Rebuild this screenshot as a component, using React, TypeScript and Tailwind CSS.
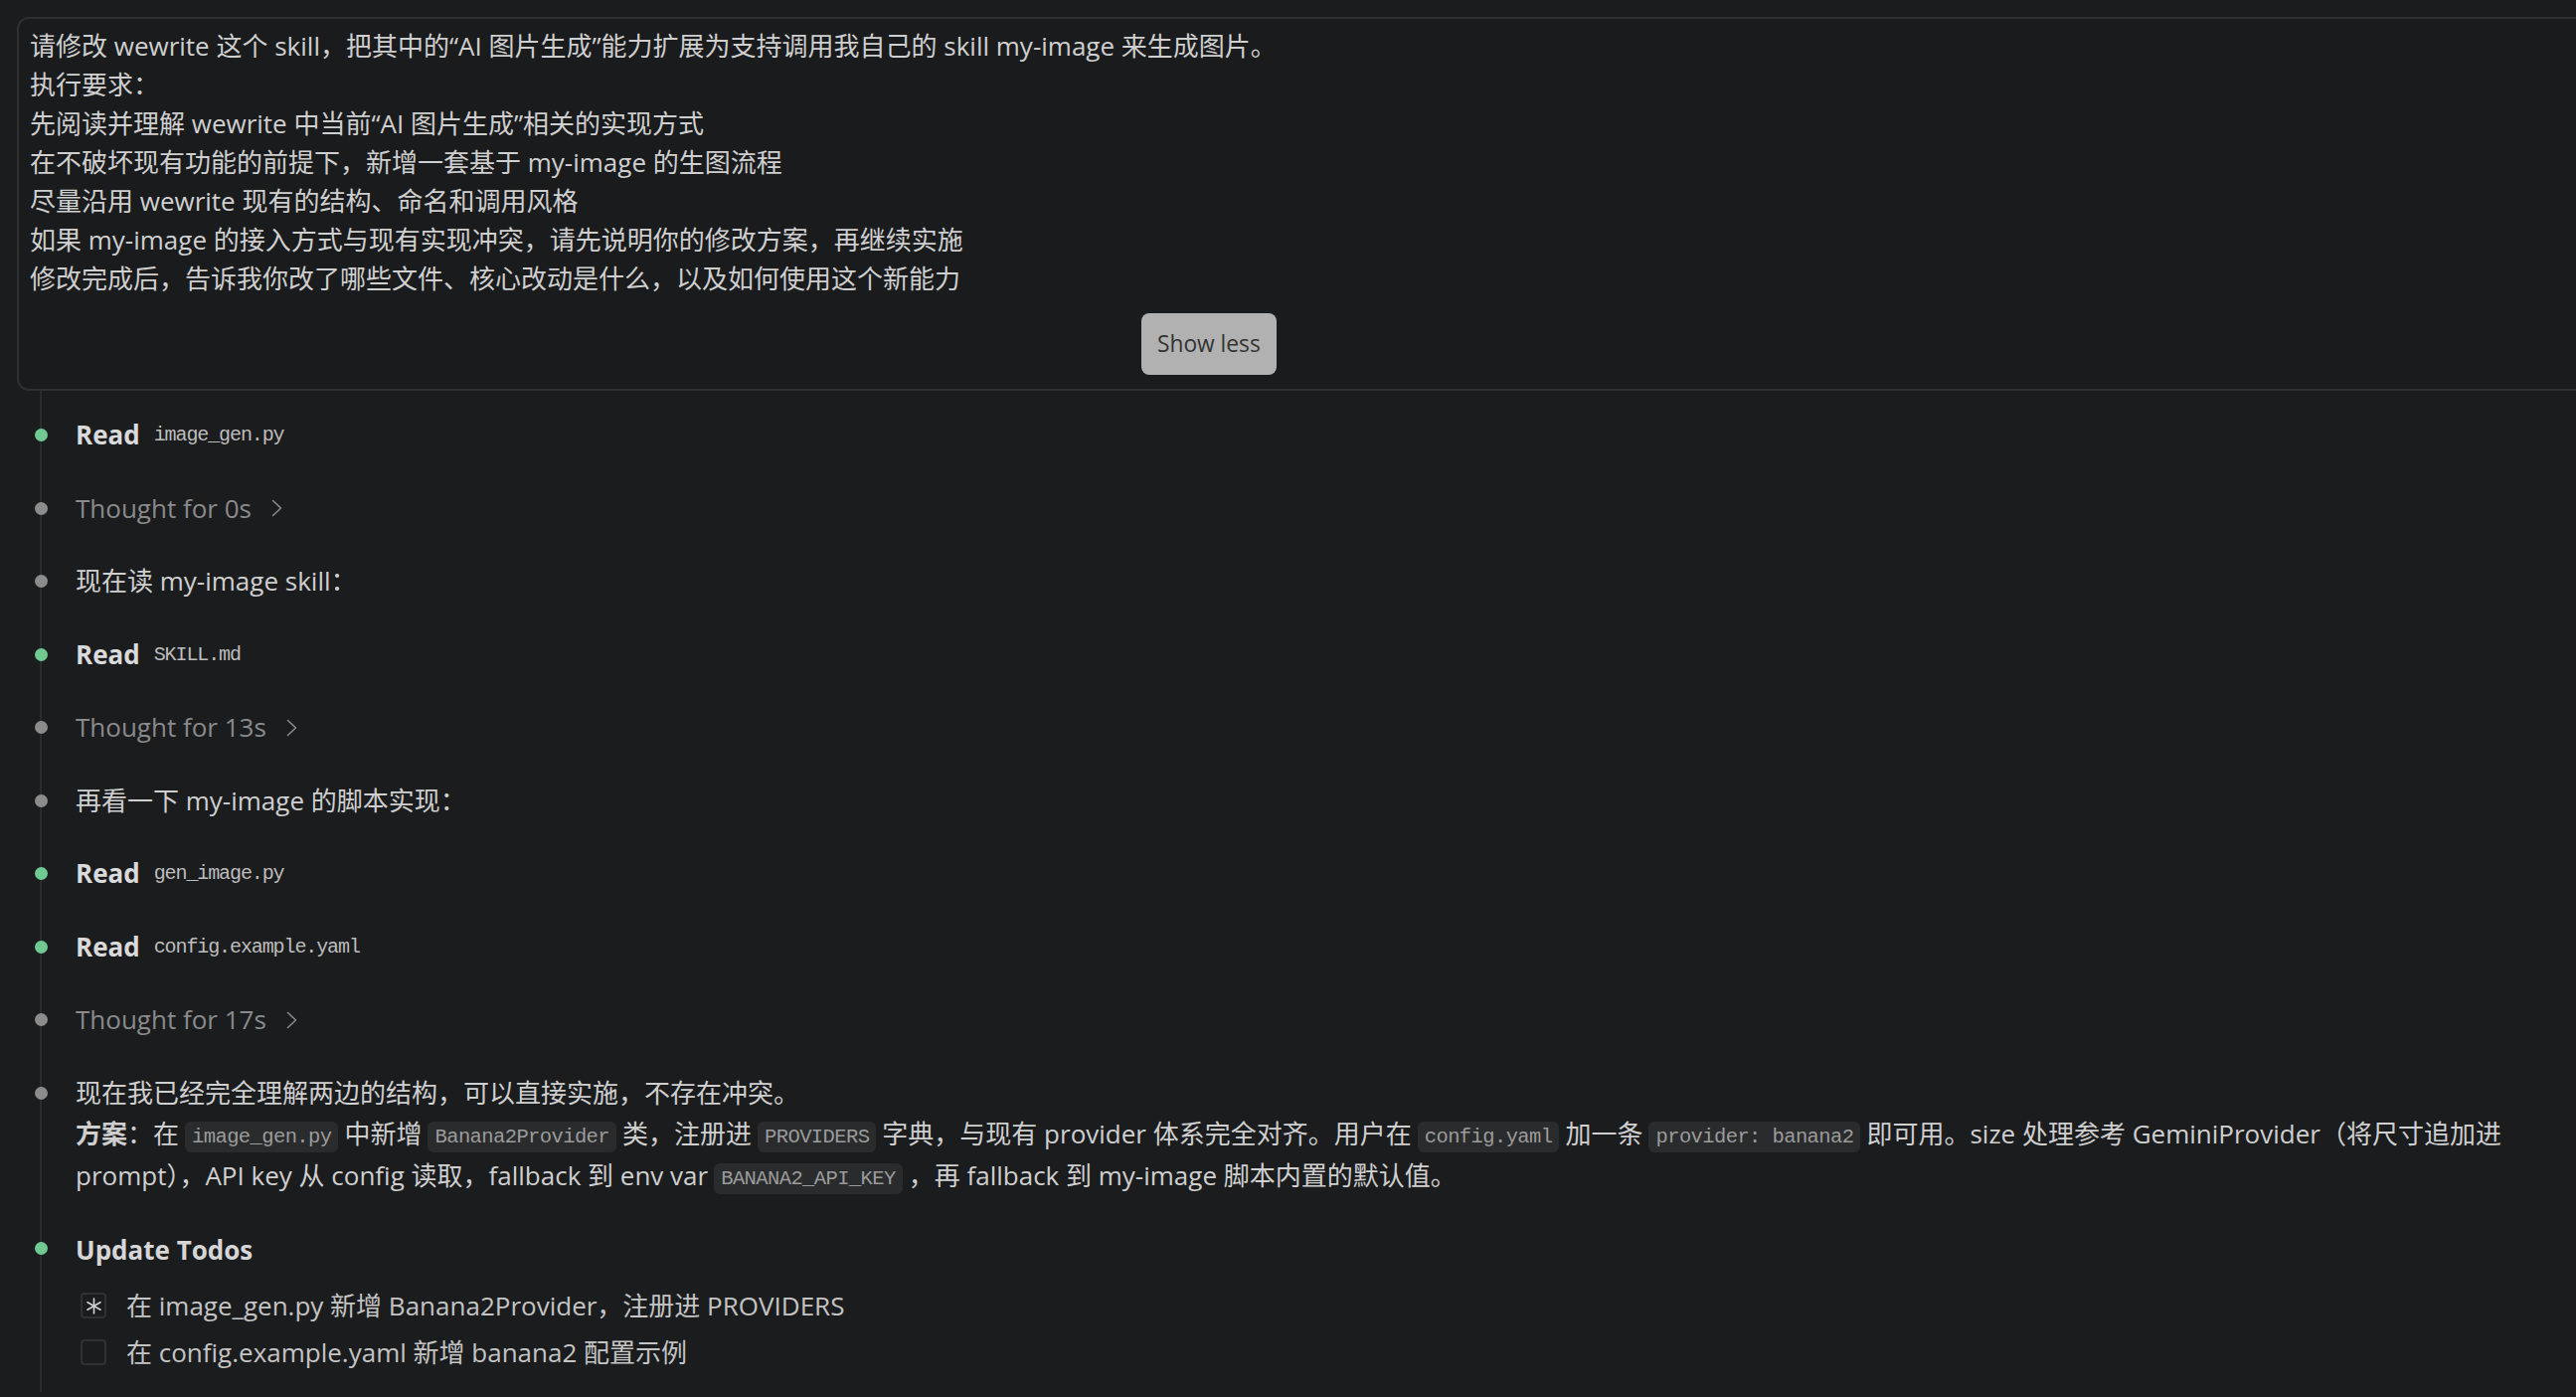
import React from "react";

const sans = "font-['Open_Sans','Noto_Sans_CJK_SC',sans-serif]";
const mono = "font-['Liberation_Mono','Noto_Sans_CJK_SC',monospace]";

const promptLines = [
  "请修改 wewrite 这个 skill，把其中的“AI 图片生成”能力扩展为支持调用我自己的 skill my-image 来生成图片。",
  "执行要求：",
  "先阅读并理解 wewrite 中当前“AI 图片生成”相关的实现方式",
  "在不破坏现有功能的前提下，新增一套基于 my-image 的生图流程",
  "尽量沿用 wewrite 现有的结构、命名和调用风格",
  "如果 my-image 的接入方式与现有实现冲突，请先说明你的修改方案，再继续实施",
  "修改完成后，告诉我你改了哪些文件、核心改动是什么，以及如何使用这个新能力",
];

const Chevron = () => (
  <svg width="11" height="18" viewBox="0 0 11 18" fill="none" className="ml-[20px]">
    <polyline points="1.5,1.5 9.5,9 1.5,16.5" stroke="#8a8a8a" strokeWidth="1.6" strokeLinecap="round" strokeLinejoin="round" />
  </svg>
);

const Asterisk = () => (
  <svg width="15" height="17" viewBox="0 0 15 17" fill="none">
    <g stroke="#d2d2d2" strokeWidth="1.6" strokeLinecap="round">
      <line x1="7.5" y1="1" x2="7.5" y2="16" />
      <line x1="1" y1="4.75" x2="14" y2="12.25" />
      <line x1="1" y1="12.25" x2="14" y2="4.75" />
    </g>
  </svg>
);

const Code = ({ children }: { children: React.ReactNode }) => (
  <span className={`${mono} mx-[6px] inline-block rounded-[6px] bg-[#2a2b2d] px-[7px] text-[20.5px] tracking-[-0.6px] leading-[31px] text-[#9b9b9b] align-[1px]`}>
    {children}
  </span>
);

const Item = ({
  green,
  children,
}: {
  green?: boolean;
  children: React.ReactNode;
}) => (
  <div className="-ml-[7.5px] flex py-[16px]">
    <div className="flex h-[41.5px] w-[13px] shrink-0 items-center">
      <div className={`h-[13px] w-[13px] rounded-full ${green ? "bg-[#70c990]" : "bg-[#8c8c8c]"}`} />
    </div>
    <div className="ml-[28.5px] min-w-0 flex-1">{children}</div>
  </div>
);

const ReadRow = ({ file }: { file: string }) => (
  <div className="flex items-center leading-[41.5px]">
    <span className="font-bold text-[#dadada]">Read</span>
    <span className={`${mono} ml-[14px] text-[20px] tracking-[-1.1px] text-[#bdbdbd]`}>{file}</span>
  </div>
);

const Thought = ({ secs }: { secs: string }) => (
  <div className="flex items-center leading-[41.5px] text-[#8a8a8a]">
    <span>Thought for {secs}</span>
    <Chevron />
  </div>
);

const Todo = ({ active, text }: { active?: boolean; text: string }) => (
  <div className="flex h-[47px] items-center">
    <div className="ml-[5px] flex h-[26px] w-[26px] shrink-0 items-center justify-center rounded-[4px] border-2 border-[#303133]">
      {active && <Asterisk />}
    </div>
    <span className="ml-[20px] text-[#c4c4c4]">{text}</span>
  </div>
);

export default function App() {
  return (
    <div className={`${sans} min-h-screen overflow-hidden bg-[#1b1c1e] pl-[17px] pt-[17px] text-[26px] text-[#cfcfcf]`}>
      <div className="rounded-l-[12px] border-2 border-r-0 border-[#2f3032] bg-[#1a1b1d] pb-[14px] pl-[11px] pt-[8px]">
        <div className="flex w-fit flex-col items-end">
          <div className="leading-[39px]">
            {promptLines.map((l) => (
              <div key={l} className="whitespace-nowrap">
                {l}
              </div>
            ))}
          </div>
          <button className="mt-[15px] h-[62px] rounded-[8px] bg-[#b0b1b0] px-[16px] text-[22.75px] text-[#333333]">
            Show less
          </button>
        </div>
      </div>

      <div className="ml-[23px] min-h-[1000px] border-l-2 border-[#2a2b2d] pt-[8px]">
        <Item green>
          <ReadRow file="image_gen.py" />
        </Item>
        <Item>
          <Thought secs="0s" />
        </Item>
        <Item>
          <div className="leading-[41.5px]">现在读 my-image skill：</div>
        </Item>
        <Item green>
          <ReadRow file="SKILL.md" />
        </Item>
        <Item>
          <Thought secs="13s" />
        </Item>
        <Item>
          <div className="leading-[41.5px]">再看一下 my-image 的脚本实现：</div>
        </Item>
        <Item green>
          <ReadRow file="gen_image.py" />
        </Item>
        <Item green>
          <ReadRow file="config.example.yaml" />
        </Item>
        <Item>
          <Thought secs="17s" />
        </Item>
        <Item>
          <div className="leading-[41.5px]">
            <div>现在我已经完全理解两边的结构，可以直接实施，不存在冲突。</div>
            <div className="whitespace-nowrap">
              <span className="font-bold">方案</span>：在<Code>image_gen.py</Code>中新增
              <Code>Banana2Provider</Code>类，注册进<Code>PROVIDERS</Code>字典，与现有 provider
              体系完全对齐。用户在<Code>config.yaml</Code>加一条<Code>provider: banana2</Code>即可用。size
              处理参考 GeminiProvider（将尺寸追加进
            </div>
            <div className="whitespace-nowrap">
              prompt），API key 从 config 读取，fallback 到 env var<Code>BANANA2_API_KEY</Code>，再 fallback 到
              my-image 脚本内置的默认值。
            </div>
          </div>
        </Item>
        <Item green>
          <div className="mt-[2px] leading-[41.5px] font-bold text-[#d6d6d6]">Update Todos</div>
          <div className="mt-[11px]">
            <Todo active text="在 image_gen.py 新增 Banana2Provider，注册进 PROVIDERS" />
            <Todo text="在 config.example.yaml 新增 banana2 配置示例" />
          </div>
        </Item>
      </div>
    </div>
  );
}
